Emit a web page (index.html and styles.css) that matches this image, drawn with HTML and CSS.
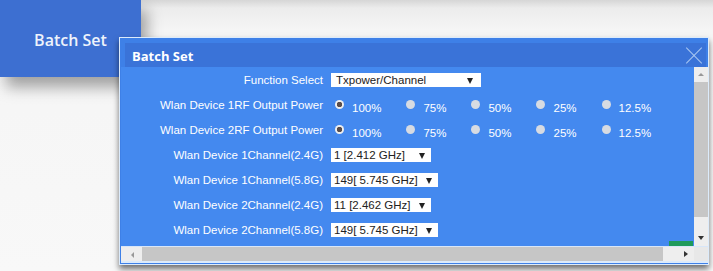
FILE: index.html
```html
<!DOCTYPE html>
<html lang="en">
<head>
    <meta charset="UTF-8">
    <title>Batch Set</title>
    <link rel="stylesheet" href="styles.css">
</head>
<body>
    <div class="page">
        <button class="batch-btn">Batch Set</button>

        <!-- Batch Set dialog -->
        <div class="dialog">
            <div class="dialog-head">
                <span class="dialog-title">Batch Set</span>
                <span class="close-btn"></span>
            </div>
            <div class="dialog-body">
                <div class="content">
                    <div class="form">
                        <label>Function Select</label>
                        <div class="ctl"><span class="select w150">Txpower/Channel<i></i></span></div>

                        <label>Wlan Device 1RF Output Power</label>
                        <div class="ctl radios">
                            <span class="opt"><b class="radio checked"></b><span>100%</span></span>
                            <span class="opt"><b class="radio"></b><span>75%</span></span>
                            <span class="opt"><b class="radio"></b><span>50%</span></span>
                            <span class="opt"><b class="radio"></b><span>25%</span></span>
                            <span class="opt"><b class="radio"></b><span>12.5%</span></span>
                        </div>

                        <label>Wlan Device 2RF Output Power</label>
                        <div class="ctl radios">
                            <span class="opt"><b class="radio checked"></b><span>100%</span></span>
                            <span class="opt"><b class="radio"></b><span>75%</span></span>
                            <span class="opt"><b class="radio"></b><span>50%</span></span>
                            <span class="opt"><b class="radio"></b><span>25%</span></span>
                            <span class="opt"><b class="radio"></b><span>12.5%</span></span>
                        </div>

                        <label>Wlan Device 1Channel(2.4G)</label>
                        <div class="ctl"><span class="select w100">1 [2.412 GHz]<i></i></span></div>

                        <label>Wlan Device 1Channel(5.8G)</label>
                        <div class="ctl"><span class="select w107">149[ 5.745 GHz]<i></i></span></div>

                        <label>Wlan Device 2Channel(2.4G)</label>
                        <div class="ctl"><span class="select w100">11 [2.462 GHz]<i></i></span></div>

                        <label>Wlan Device 2Channel(5.8G)</label>
                        <div class="ctl"><span class="select w107">149[ 5.745 GHz]<i></i></span></div>
                    </div>
                    <span class="green-mark"></span>
                </div>
                <div class="vscroll">
                    <span class="sb-btn up"></span>
                    <span class="sb-track"></span>
                    <span class="sb-btn down"></span>
                </div>
                <div class="hscroll">
                    <span class="sb-btn left"></span>
                    <span class="sb-track"></span>
                    <span class="sb-btn right"></span>
                </div>
                <div class="corner"></div>
            </div>
        </div>
    </div>
</body>
</html>
```

FILE: styles.css
```css
body {
    margin: 0;
    background: #ffffff;
    font-family: "Liberation Sans", Arial, sans-serif;
}

.page {
    position: relative;
    width: 713px;
    height: 271px;
    overflow: hidden;
    background: linear-gradient(to bottom, #d6d6d6 0, #ececec 8px, #f5f5f5 30px, #f8f8f8 100%);
}

/* Page button behind the dialog */
.batch-btn {
    display: block;
    width: 141px;
    height: 77px;
    border: none;
    background: #3d6fd1;
    color: #eef3fb;
    font-family: "Open Sans", sans-serif;
    font-size: 16px;
    font-weight: 600;
    padding: 2px 0 0 0;
    box-shadow: 6px 10px 14px rgba(0, 0, 0, 0.35);
}

/* Dialog */
.dialog {
    position: absolute;
    left: 119px;
    top: 37px;
    width: 590px;
    height: 228px;
    box-sizing: border-box;
    border: 1px solid #dcebfb;
    background: #3e80e7;
    display: flex;
    flex-direction: column;
    box-shadow: 0 4px 6px rgba(0, 0, 0, 0.55);
}

.dialog-head {
    height: 24px;
    margin: 5px 2px 0 5px;
    background: #3a73d8;
    display: flex;
    align-items: center;
    justify-content: space-between;
}

.dialog-title {
    color: #ffffff;
    font-family: "Open Sans", sans-serif;
    font-size: 13px;
    font-weight: 700;
    padding-left: 7px;
    padding-top: 1px;
}

.close-btn {
    position: relative;
    width: 16px;
    height: 16px;
    margin-right: 4px;
    margin-top: 1px;
}

.close-btn::before,
.close-btn::after {
    content: "";
    position: absolute;
    left: -3px;
    top: 7px;
    width: 22px;
    height: 1px;
    background: #a9c7f2;
    transform: rotate(45deg);
}

.close-btn::after {
    transform: rotate(-45deg);
}

.dialog-body {
    flex: 1;
    margin-left: 1px;
    display: grid;
    grid-template-columns: 1fr 14px;
    grid-template-rows: 179px 15px;
    border-bottom: 2px solid #dcebfb;
    margin-bottom: 1px;
}

.content {
    position: relative;
    background: #4489ef;
    overflow: hidden;
}

.form {
    display: grid;
    grid-template-columns: 202px auto;
    grid-auto-rows: 25px;
    column-gap: 8px;
    align-items: center;
    font-size: 11.5px;
    color: #ffffff;
}

.form label {
    text-align: right;
}

.ctl {
    display: flex;
    align-items: center;
}

.select {
    position: relative;
    display: block;
    height: 14px;
    line-height: 14px;
    background: #ffffff;
    color: #222222;
    padding-left: 3px;
    box-sizing: border-box;
}

.select i {
    position: absolute;
    right: 6px;
    top: 5px;
    border-left: 3px solid transparent;
    border-right: 3px solid transparent;
    border-top: 6px solid #222222;
}

.w150 { width: 150px; padding-left: 5px; }
.w150 i { right: 8px; }
.w100 { width: 100px; }
.w107 { width: 107px; }

.radios .opt {
    display: flex;
    align-items: center;
    margin-right: 25px;
    margin-left: 4px;
}

.radios .opt + .opt {
    margin-left: 0;
}

.radio {
    width: 9px;
    height: 9px;
    border-radius: 50%;
    background: #d7dbe2;
    margin-right: 8px;
}

.radio.checked {
    background: radial-gradient(circle, #5a4d4a 0, #5a4d4a 2.5px, #eeeeee 3px);
}

.opt span {
    margin-top: 7px;
}

.green-mark {
    position: absolute;
    right: 1px;
    bottom: 0;
    width: 24px;
    height: 5px;
    background: #1f9a5a;
}

/* Scrollbars */
.vscroll,
.hscroll {
    display: flex;
    background: #c6c6c6;
}

.vscroll {
    flex-direction: column;
}

.sb-btn {
    position: relative;
    background: #eeeeee;
}

.vscroll .up { height: 15px; }
.vscroll .down { height: 29px; }
.vscroll .sb-track { flex: 1; }

.hscroll {
    border-top: 1px solid #d8e6f8;
}

.hscroll .left { width: 21px; }
.hscroll .right { width: 31px; }
.hscroll .sb-track { flex: 1; }

.sb-btn::after {
    content: "";
    position: absolute;
}

.up::after {
    left: 4px;
    top: 6px;
    border-left: 3px solid transparent;
    border-right: 3px solid transparent;
    border-bottom: 3px solid #999999;
}

.down::after {
    left: 4px;
    bottom: 6px;
    border-left: 3px solid transparent;
    border-right: 3px solid transparent;
    border-top: 4px solid #333333;
}

.left::after {
    left: 10px;
    top: 5px;
    border-top: 3px solid transparent;
    border-bottom: 3px solid transparent;
    border-right: 3px solid #999999;
}

.right::after {
    left: 21px;
    top: 4px;
    border-top: 3px solid transparent;
    border-bottom: 3px solid transparent;
    border-left: 4px solid #333333;
}

.corner {
    background: #e8e8e8;
    border-top: 1px solid #d8e6f8;
}
```
